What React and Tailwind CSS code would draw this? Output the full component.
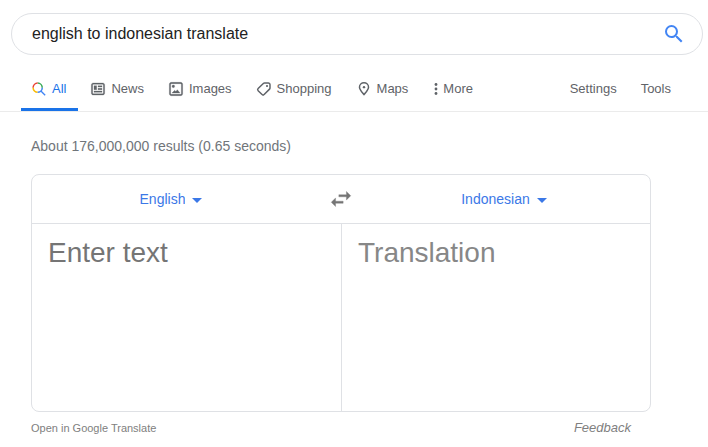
import React from "react";

function AllIcon() {
  return (
    <svg viewBox="0 0 24 24" className="size-4" aria-hidden="true">
      <path fill="#34a853" d="M10 2v2.3a5.7 5.7 0 0 1 5.7 5.7H18a8 8 0 0 0-8-8" />
      <path fill="#ea4335" d="M10 4.3V2a8 8 0 0 0-8 8h2.3c0-3.15 2.55-5.7 5.7-5.7" />
      <path fill="#fbbc04" d="M4.3 10H2a8 8 0 0 0 8 8v-2.3c-3.15 0-5.7-2.55-5.7-5.7" />
      <path fill="#4285f4" d="M22 20.59l-5.69-5.69A7.96 7.96 0 0 0 18 10h-2.3a5.7 5.7 0 0 1-5.7 5.7V18c1.85 0 3.52-.64 4.88-1.68l5.69 5.69L22 20.59" />
    </svg>
  );
}

function NewsIcon() {
  return (
    <svg viewBox="0 0 24 24" className="size-4" fill="currentColor" stroke="currentColor" strokeWidth="0.4" aria-hidden="true">
      <path d="M12 11h6v2h-6v-2zm-6 6h12v-2H6v2zm0-4h4V7H6v6zm16-7.22v12.44c0 1.54-1.34 2.78-3 2.78H5c-1.64 0-3-1.25-3-2.78V5.78C2 4.26 3.36 3 5 3h14c1.64 0 3 1.25 3 2.78zM19.99 12V5.78c0-.42-.46-.78-1-.78H5c-.54 0-1 .36-1 .78v12.44c0 .42.46.78 1 .78h14c.54 0 1-.36 1-.78V12zM12 9h6V7h-6v2" />
    </svg>
  );
}

function ImagesIcon() {
  return (
    <svg viewBox="0 0 24 24" className="size-4" fill="currentColor" stroke="currentColor" strokeWidth="0.4" aria-hidden="true">
      <path d="M14 13l4 5H6l4-4 1.79 1.78L14 13zm-6.01-2.99A2 2 0 0 0 8 6a2 2 0 0 0-.01 4.01zM22 5v14a3 3 0 0 1-3 2.99H5c-1.64 0-3-1.36-3-3V5c0-1.64 1.36-3 3-3h14c1.65 0 3 1.36 3 3zm-2.01 0a1 1 0 0 0-1-1H5a1 1 0 0 0-1 1v14a1 1 0 0 0 1 1h14a1 1 0 0 0 1-1V5" />
    </svg>
  );
}

function ShoppingIcon() {
  return (
    <svg viewBox="0 0 24 24" className="size-4" fill="none" stroke="currentColor" strokeWidth="2.2" aria-hidden="true">
      <path d="M12.8 3H18.5A2.5 2.5 0 0 1 21 5.5V10.5A2.5 2.5 0 0 1 20.3 12.2L12.2 20.4A2.2 2.2 0 0 1 9.1 20.4L3.2 14.5A2.2 2.2 0 0 1 3.2 11.4L11 3.7A2.5 2.5 0 0 1 12.8 3Z" />
      <circle cx="16.5" cy="7.5" r="1.6" fill="currentColor" stroke="none" />
    </svg>
  );
}

function MapsIcon() {
  return (
    <svg viewBox="0 0 24 24" className="size-4" fill="none" stroke="currentColor" strokeWidth="2.2" aria-hidden="true">
      <path d="M12 20.5C9.5 17.3 5.2 12.7 5.2 9.2a6.8 6.5 0 0 1 13.6 0C18.8 12.7 14.5 17.3 12 20.5Z" />
      <circle cx="12" cy="9.2" r="1.8" fill="currentColor" stroke="none" />
    </svg>
  );
}

function MoreIcon() {
  return (
    <svg viewBox="0 0 6 16" className="h-4 w-[6px]" fill="currentColor" aria-hidden="true">
      <circle cx="4" cy="3.5" r="1.4" />
      <circle cx="4" cy="8" r="1.4" />
      <circle cx="4" cy="12.5" r="1.4" />
    </svg>
  );
}

const tabs = [
  { label: "News", icon: NewsIcon },
  { label: "Images", icon: ImagesIcon },
  { label: "Shopping", icon: ShoppingIcon },
  { label: "Maps", icon: MapsIcon },
];

function LanguageSelect({ label, value }) {
  return (
    <div className="flex flex-1 justify-center">
      <div className="relative text-[#3b78e7]">
        <select aria-label={label} defaultValue={value} className="field-sizing-content h-6 cursor-pointer appearance-none bg-transparent pr-6 text-sm">
          <option>{value}</option>
        </select>
        <svg viewBox="0 0 24 24" className="pointer-events-none absolute top-0 right-0 size-6" fill="currentColor" aria-hidden="true">
          <path d="M7 11l5 5 5-5z" />
        </svg>
      </div>
    </div>
  );
}

function App() {
  return (
    <div className="bg-white pb-2 font-['Liberation_Sans',Arial,sans-serif] text-[#5f6368]">
      <header className="border-b border-[#ebebeb] pt-[13px]">
        <form className="mr-[5px] ml-[11px] flex h-[42px] items-center rounded-full border border-[#dfe1e5] pr-4 pl-5" onSubmit={(e) => e.preventDefault()}>
          <input
            type="text"
            aria-label="Search"
            defaultValue="english to indonesian translate"
            className="min-w-0 flex-1 text-base text-[#222] outline-none"
          />
          <button type="submit" aria-label="Google Search" className="text-[#4285f4]">
            <svg viewBox="0 0 24 24" className="size-6" fill="currentColor" aria-hidden="true">
              <path d="M15.5 14h-.79l-.28-.27A6.471 6.471 0 0 0 16 9.5 6.5 6.5 0 1 0 9.5 16c1.61 0 3.09-.59 4.23-1.57l.27.28v.79l5 4.99L20.49 19l-4.99-5zm-6 0C7.01 14 5 11.99 5 9.5S7.01 5 9.5 5 14 7.01 14 9.5 11.99 14 9.5 14z" />
            </svg>
          </button>
        </form>

        <nav className="mt-3 flex h-11 pr-[25px] pl-[21px] text-[13px]">
          <a href="#all" className="flex items-center gap-[5px] border-b-3 border-[#1a73e8] pt-0.5 pr-3 pl-[10px] text-[#1a73e8]">
            <AllIcon />
            All
          </a>
          {tabs.map((tab) => (
            <a key={tab.label} href="#" className="flex items-center gap-[5px] border-b-3 border-transparent px-3 pt-0.5">
              <tab.icon />
              {tab.label}
            </a>
          ))}
          <button type="button" className="flex items-center gap-[5px] border-b-3 border-transparent px-3 pt-0.5">
            <MoreIcon />
            More
          </button>
          <button type="button" className="ml-auto border-b-3 border-transparent px-3 pt-0.5">Settings</button>
          <button type="button" className="border-b-3 border-transparent px-3 pt-0.5">Tools</button>
        </nav>
      </header>

      <main className="mr-5 ml-[31px] max-w-[620px]">
        <p className="pt-6 pb-[18px] text-sm text-[#70757a]">About 176,000,000 results (0.65 seconds)</p>

        <section className="rounded-lg border border-[#dfe1e5]">
          <div className="flex h-[49px] items-center border-b border-[#dfe1e5]">
            <LanguageSelect label="Source language" value="English" />
            <button type="button" aria-label="Swap languages" className="flex w-12 justify-center text-[#757575]">
              <svg viewBox="0 0 24 24" className="size-[26px]" fill="currentColor" stroke="currentColor" strokeWidth="0.3" aria-hidden="true">
                <path d="M6.99 11L3 15l3.99 4v-3H14v-2H6.99v-3zM21 9l-3.99-4v3H10v2h7.01v3L21 9z" />
              </svg>
            </button>
            <LanguageSelect label="Target language" value="Indonesian" />
          </div>
          <div className="grid h-[187px] grid-cols-2 text-[28px] leading-8">
            <textarea
              aria-label="Source text"
              placeholder="Enter text"
              className="resize-none px-4 py-[13px] outline-none placeholder:text-[#757575]"
            />
            <div className="border-l border-[#dfe1e5] px-4 py-[13px] text-[#878787]">Translation</div>
          </div>
        </section>

        <footer className="mt-2 flex items-center justify-between pr-5 text-[#808080]">
          <a href="#translate" className="text-[11px]">Open in Google Translate</a>
          <a href="#feedback" className="text-[13px] leading-4 italic">Feedback</a>
        </footer>
      </main>
    </div>
  );
}

export default App;
